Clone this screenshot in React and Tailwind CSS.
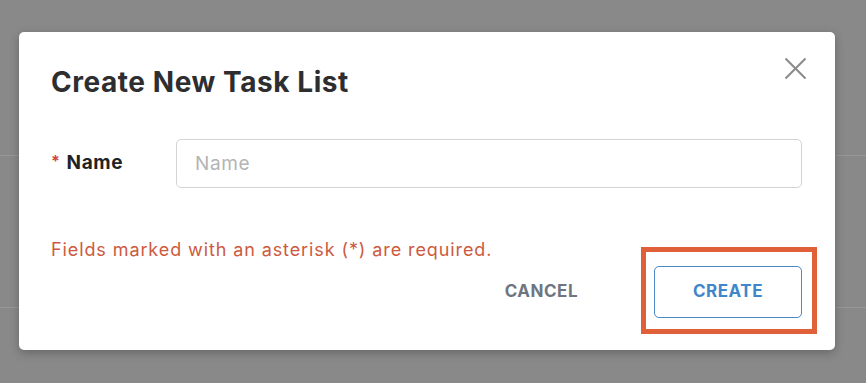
import React, { useState } from "react";

const CloseIcon = () => (
  <svg width="23" height="23" viewBox="0 0 23 23" fill="none">
    <path d="M1.5 1.5 L21.5 21.5 M21.5 1.5 L1.5 21.5" stroke="#8a8a8a" strokeWidth="2" />
  </svg>
);

const App = () => {
  const [name, setName] = useState("");

  return (
    <div className="relative w-full h-[383px] overflow-hidden bg-[#898989] font-['Inter','Liberation_Sans',sans-serif]">
      {/* page behind the overlay */}
      <div className="h-[156px] border-b border-[#979797]" />
      <div className="h-[152px] border-b border-[#979797]" />

      <div className="absolute left-[19px] top-[32px] w-[816px] h-[318px] bg-white rounded-[5px] shadow-[0_3px_10px_rgba(0,0,0,0.25)] pl-[32px] pr-[33px] pt-[33px]">
        <div className="flex items-start justify-between">
          <h2 className="text-[28px] leading-[34px] font-bold text-[#2e2e30] tracking-[0.55px]">
            Create New Task List
          </h2>
          <button className="mt-[-8px] mr-[-5px]">
            <CloseIcon />
          </button>
        </div>

        <div className="flex items-center mt-[40px]">
          <label className="w-[125px] text-[19px] font-bold text-[#222] tracking-[0.6px]">
            <span className="text-[#d0463b] text-[16px] align-top mr-[6px]">*</span>
            Name
          </label>
          <input
            className="flex-1 h-[49px] border border-[#d4d4d4] rounded-[5px] px-[18px] text-[19px] tracking-[0.6px] text-[#333] placeholder:text-[#b4b4b4] outline-none"
            placeholder="Name"
            value={name}
            onChange={(e) => setName(e.target.value)}
          />
        </div>

        <p className="mt-[50px] text-[18px] leading-[24px] text-[#cd5a40] tracking-[0.9px]">
          Fields marked with an asterisk (*) are required.
        </p>

        <div className="flex items-center justify-end gap-[76px] mt-[4px]">
          <button className="text-[17px] font-bold text-[#6f7580] tracking-[0.5px]">
            CANCEL
          </button>
          <div className="relative">
            <button className="w-[148px] h-[52px] border border-[#4a88c7] rounded-[5px] text-[17px] font-bold text-[#3f86cb] tracking-[0.5px]">
              CREATE
            </button>
            <div className="absolute top-[-19px] bottom-[-16px] left-[-13px] right-[-15px] border-[5px] border-[#e0603a] pointer-events-none" />
          </div>
        </div>
      </div>
    </div>
  );
};

export default App;
